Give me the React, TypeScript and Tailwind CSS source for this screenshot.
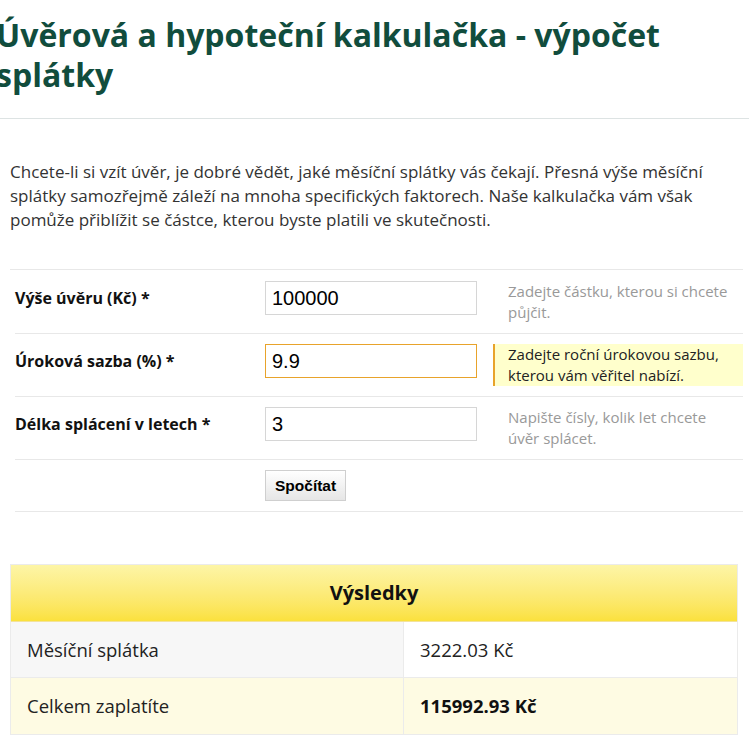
import React, { useState } from 'react';

const fields = [
  { id: 'amount', label: 'Výše úvěru (Kč) *', value: '100000', hint: 'Zadejte částku, kterou si chcete půjčit.' },
  { id: 'rate', label: 'Úroková sazba (%) *', value: '9.9', hint: 'Zadejte roční úrokovou sazbu, kterou vám věřitel nabízí.' },
  { id: 'years', label: 'Délka splácení v letech *', value: '3', hint: 'Napište čísly, kolik let chcete úvěr splácet.' },
];

const App = () => {
  const [active] = useState('rate');

  return (
    <div className="min-h-screen bg-white text-[#333] font-['Open_Sans',sans-serif]">
      <h1 className="-ml-[4px] pt-[15px] text-[32px] leading-[40px] font-bold text-[#114d3d]">
        Úvěrová a hypoteční kalkulačka - výpočet splátky
      </h1>

      <div className="mt-[23px] border-t border-[#dde3e3]" />

      <p className="mt-[41px] ml-[10px] mr-[10px] text-[17px] leading-[24px] text-[#333]">
        Chcete-li si vzít úvěr, je dobré vědět, jaké měsíční splátky vás čekají. Přesná výše měsíční
        splátky samozřejmě záleží na mnoha specifických faktorech. Naše kalkulačka vám však
        pomůže přiblížit se částce, kterou byste platili ve skutečnosti.
      </p>

      <div className="mt-[37px] ml-[10px] mr-[6px] border-t border-[#e8e8e8]">
        {fields.map((f, i) => {
          const isActive = f.id === active;
          return (
            <div key={f.id} className={`ml-[5px] flex items-start pb-[10px] border-b border-[#e8e8e8] ${i === 0 ? 'pt-[11px]' : 'pt-[10px]'}`}>
              <label className="w-[250px] shrink-0 text-[16px] leading-[34px] font-bold text-[#111]">
                {f.label}
              </label>
              <input
                defaultValue={f.value}
                className={`w-[212px] h-[34px] shrink-0 px-[6px] bg-white text-[20px] text-black font-['Liberation_Sans',Arial,sans-serif] outline-none border ${isActive ? 'border-[#e8a32b]' : 'border-[#d6d6d6]'}`}
              />
              <div
                className={`ml-[16px] flex-1 min-h-[42px] pl-[13px] pr-[8px] text-[15px] leading-[21px] border-l-2 ${isActive ? 'bg-[#ffffcc] border-[#e8a32b] text-[#222]' : 'border-transparent text-[#999]'}`}
              >
                {f.hint}
              </div>
            </div>
          );
        })}
        <div className="ml-[5px] flex py-[10px] border-b border-[#e8e8e8]">
          <div className="w-[250px] shrink-0" />
          <button className="h-[31px] px-[9px] border border-[#cfcfcf] bg-gradient-to-b from-white to-[#e6e6e6] text-[15.5px] font-bold text-black font-['Liberation_Sans',Arial,sans-serif]">
            Spočítat
          </button>
        </div>
      </div>

      <div className="mt-[52px] ml-[10px] w-[728px] border border-[#ebebeb]">
        <div className="h-[57px] flex items-center justify-center bg-gradient-to-b from-[#fdf5a6] to-[#fbe13c] border-b border-[#f3e39a]">
          <span className="text-[20px] font-bold text-[#111]">Výsledky</span>
        </div>
        <div className="flex h-[56px] border-b border-[#ebebeb]">
          <div className="w-[393px] flex items-center pl-[16px] bg-[#f7f7f7] border-r border-[#ebebeb] text-[18.5px] text-[#222]">
            Měsíční splátka
          </div>
          <div className="flex-1 flex items-center pl-[16px] bg-white text-[18.5px] text-[#222]">
            3222.03 Kč
          </div>
        </div>
        <div className="flex h-[56px]">
          <div className="w-[393px] flex items-center pl-[16px] bg-[#fefbe3] border-r border-[#ebebeb] text-[18.5px] text-[#222]">
            Celkem zaplatíte
          </div>
          <div className="flex-1 flex items-center pl-[16px] bg-[#fefbe3] text-[18.5px] font-bold text-[#111]">
            115992.93 Kč
          </div>
        </div>
      </div>
    </div>
  );
};

export default App;
